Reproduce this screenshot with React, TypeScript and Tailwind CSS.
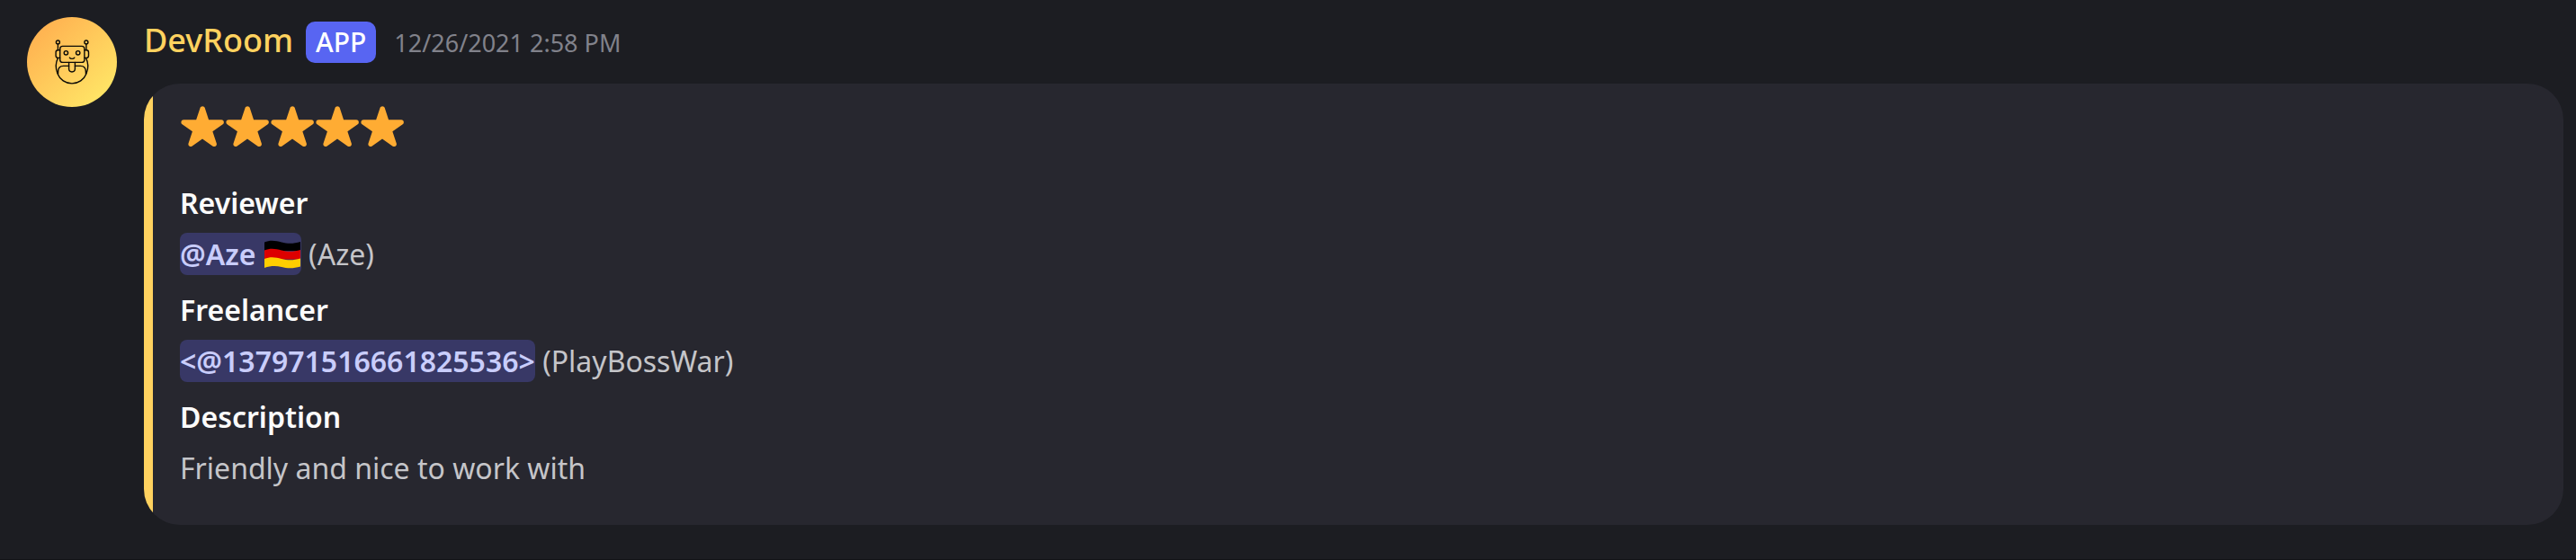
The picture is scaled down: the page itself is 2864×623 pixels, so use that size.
import type { ReactNode } from "react";

function RobotAvatar() {
  return (
    <svg viewBox="0 0 100 100" className="size-[100px] shrink-0" role="img" aria-label="DevRoom avatar">
      <defs>
        <linearGradient id="avatar-fill" x1="0.1" y1="0.1" x2="0.85" y2="0.9">
          <stop offset="0" stopColor="#ffb050" />
          <stop offset="1" stopColor="#ffe566" />
        </linearGradient>
      </defs>
      <circle cx="50" cy="50" r="50" fill="url(#avatar-fill)" />
      <g fill="none" stroke="#0b0a06" strokeWidth="1.4" strokeLinecap="round" strokeLinejoin="round">
        <circle cx="34.4" cy="28" r="2" />
        <circle cx="65.9" cy="28" r="2" />
        <path d="M34.4 30v6.5M65.9 30v6.5" />
        <rect x="36.7" y="32.4" width="27.2" height="18" rx="3" />
        <path d="M36.7 36.8h-2.2c-1.6 0-2.4.9-2.4 2.4v3.8c0 1.5.8 2.4 2.4 2.4h2.2M63.9 36.8h2.2c1.6 0 2.4.9 2.4 2.4v3.8c0 1.5-.8 2.4-2.4 2.4h-2.2" />
        <circle cx="43.4" cy="39.8" r="2.2" />
        <circle cx="56.7" cy="39.8" r="2.2" />
        <path d="M47.4 45.2c1 1.6 4.4 1.6 5.4 0" />
        <path d="M46.6 50.4v7.2a3.4 3.4 0 0 0 6.8 0v-7.2" />
        <path d="M46.6 54.4h-6c-3.8 0-6 2.6-6 6.6v2M53.4 54.4h6c3.8 0 6 2.6 6 6.6v2" />
        <path d="M34.4 45.6C31.6 51 31.6 57 34 63c2.6 6.6 8.8 10.9 16 10.9s13.4-4.3 16-10.9c2.4-6 2.4-12-.4-17.4" />
      </g>
    </svg>
  );
}

function Star() {
  return (
    <svg viewBox="0 0 36 36" className="size-[50px]" aria-hidden="true">
      <path
        fill="#ffac33"
        d="M27.287 34.627c-.404 0-.806-.124-1.152-.371L18 28.422l-8.135 5.834c-.343.247-.748.371-1.151.371-.409 0-.817-.127-1.16-.38-.679-.498-.963-1.372-.702-2.173l3.17-9.639-8.193-5.683c-.687-.491-.977-1.368-.718-2.172.261-.804 1.005-1.35 1.85-1.354l10.107-.017 3.179-9.549c.266-.801 1.015-1.342 1.859-1.342s1.594.541 1.859 1.342l3.123 9.549 10.163.017c.845.004 1.59.55 1.85 1.354.26.804-.029 1.681-.718 2.172l-8.193 5.683 3.17 9.639c.261.801-.022 1.675-.702 2.173-.344.253-.752.38-1.16.38z"
      />
    </svg>
  );
}

function GermanFlag() {
  return (
    <svg viewBox="0 0 42 32" className="inline-block h-8 w-[42px] align-[-4px]" role="img" aria-label="Germany">
      <path fill="#000" d="M1 2.500C8-.5 14 1 20 2.500s13 2 21-.5v10H1z" />
      <path fill="#dd0000" d="M1 11.500c7-3 13-1.500 19 0s13 2 21-.5v10.500H1z" />
      <path fill="#ffce00" d="M1 21c7-3 13-1.500 19 0s13 2 21-.5v9c-8 2.500-15 2-21 .5s-12-1.500-19 1z" />
    </svg>
  );
}

function Mention({ children }: { children: ReactNode }) {
  return (
    <a href="#" className="inline-block rounded-lg bg-[#383866] font-semibold leading-[47px] text-[#c9cdfb]">
      {children}
    </a>
  );
}

function Field({ name, children }: { name: string; children: ReactNode }) {
  return (
    <div>
      <dt className="mb-[11px] text-[32px] font-semibold leading-[44px] text-[#fbfbfb]">{name}</dt>
      <dd className="text-[32px] leading-[47px] text-[#c5c5c9]">{children}</dd>
    </div>
  );
}

export default function App() {
  return (
    <main className="min-h-screen border-b border-[#121317] bg-[#1c1d22] font-['Noto_Sans',sans-serif]">
      <article className="flex gap-[30px] pt-[19px] pr-3.5 pl-[30px]">
        <RobotAvatar />
        <div className="min-w-0 flex-1">
          <header className="flex items-baseline pt-[3px]">
            <h1 className="text-[36px] font-medium leading-[46px] text-[#ffd25f]">DevRoom</h1>
            <span className="ml-3.5 rounded-[10px] bg-[#5865f2] px-[11px] text-[30px] font-medium leading-[46px] text-white">
              APP
            </span>
            <time dateTime="2021-12-26T14:58" className="ml-5 text-[27px] leading-[46px] text-[#81828b]">
              12/26/2021 2:58 PM
            </time>
          </header>
          <section className="mt-[22px] flex overflow-hidden rounded-[40px] bg-[#27272f]">
            <div className="w-2.5 shrink-0 bg-[#ffd25f]" />
            <div className="min-w-0 flex-1 px-[30px] pt-[22px] pb-10">
              <div className="flex" role="img" aria-label="5 out of 5 stars">
                <Star />
                <Star />
                <Star />
                <Star />
                <Star />
              </div>
              <dl className="mt-[39px] flex flex-col gap-[17px]">
                <Field name="Reviewer">
                  <Mention>
                    @Aze <GermanFlag />
                  </Mention>{" "}
                  (Aze)
                </Field>
                <Field name="Freelancer">
                  <Mention>&lt;@137971516661825536&gt;</Mention> (PlayBossWar)
                </Field>
                <Field name="Description">Friendly and nice to work with</Field>
              </dl>
            </div>
          </section>
        </div>
      </article>
    </main>
  );
}
